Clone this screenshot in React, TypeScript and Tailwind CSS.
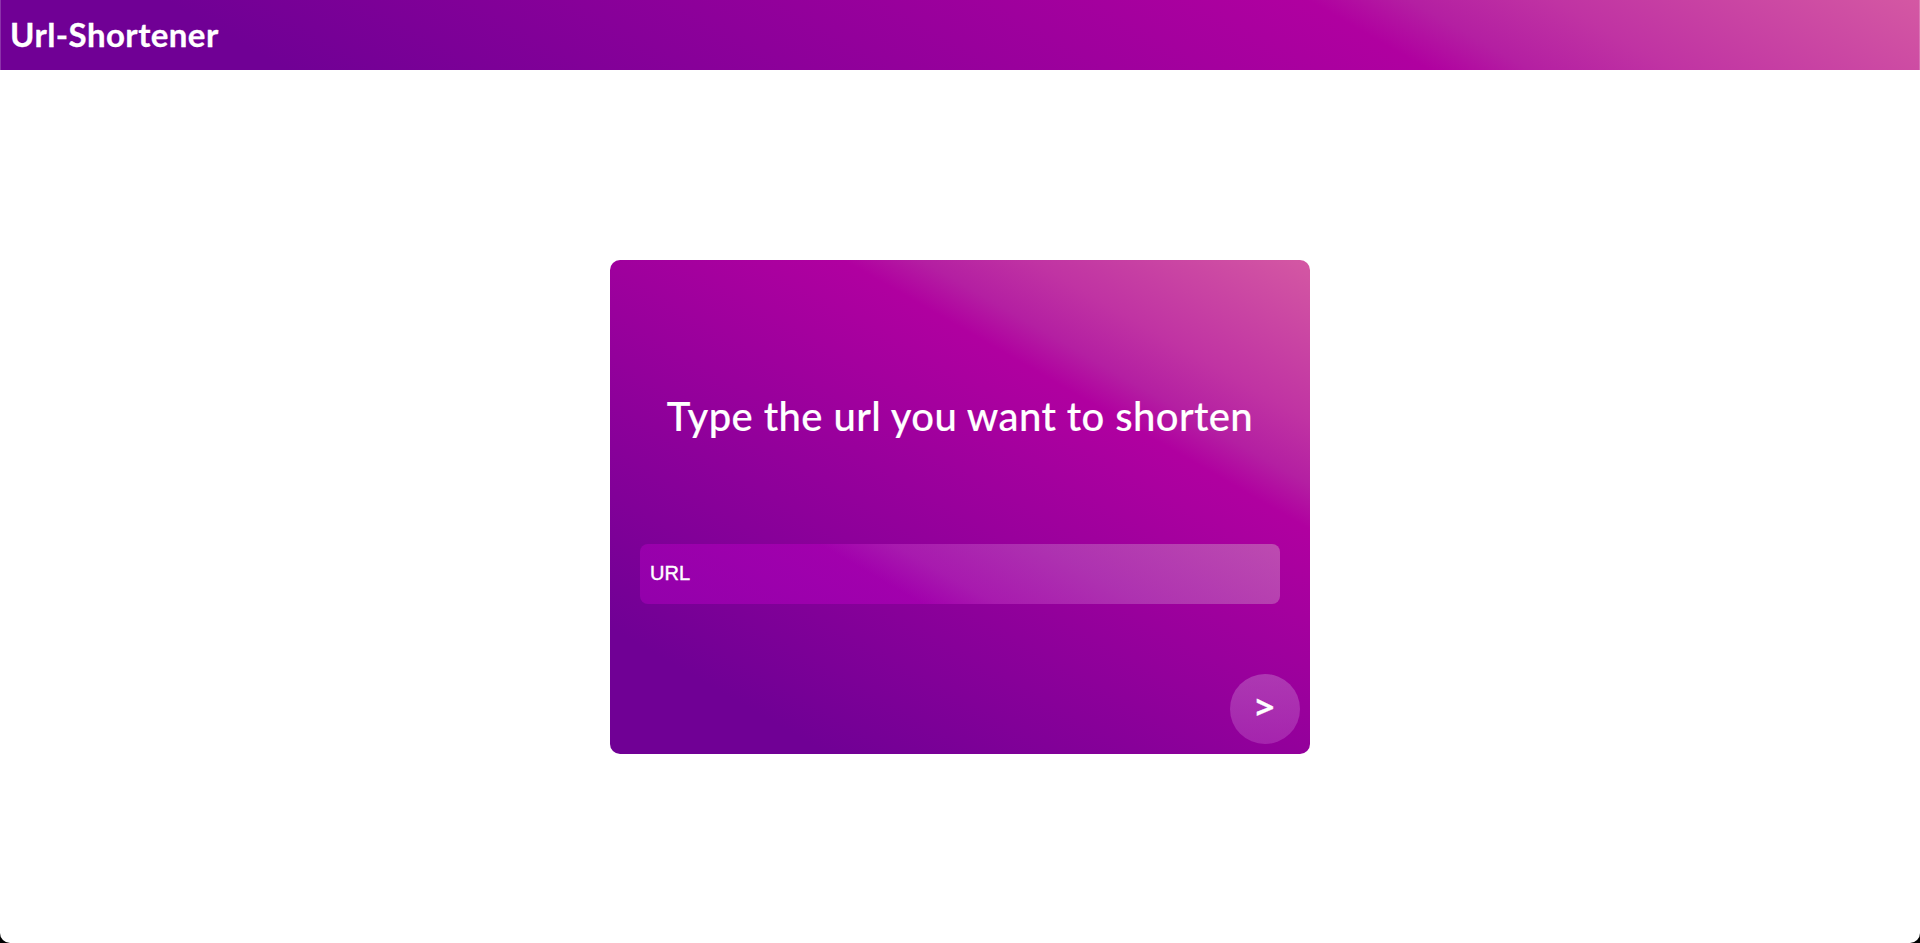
export default function App() {
  return (
    <div className="h-[943px] bg-black">
      <div className="flex h-full flex-col overflow-hidden rounded-b-[10px] bg-white font-[Lato,sans-serif] text-white">
        <header className="flex h-[70px] shrink-0 items-center border-x border-white/20 bg-[linear-gradient(30deg,#700095_14%,#b000a0_70%,#b41fa2_75%,#c033a3_82%,#d458a3_100%)] bg-origin-border px-[9px] pb-[2px]">
          <h1 className="text-[33px] leading-[44px] font-bold tracking-[0.45px] whitespace-nowrap [-webkit-text-stroke:0.3px_white] [stroke-linejoin:round]">
            Url-Shortener
          </h1>
        </header>
        <main className="flex flex-1 items-center justify-center">
          <form
            onSubmit={(e) => e.preventDefault()}
            className="flex h-[494px] w-[700px] flex-col rounded-[10px] bg-[linear-gradient(30deg,#700095_14%,#b000a0_70%,#b41fa2_75%,#c033a3_82%,#d458a3_100%)]"
          >
            <h2 className="mt-[129px] text-center text-[40px] leading-[55px] font-medium tracking-[0.4px] whitespace-nowrap [-webkit-text-stroke:0.15px_white] [stroke-linejoin:round]">
              Type the url you want to shorten
            </h2>
            <input
              type="text"
              placeholder="URL"
              className="mx-[30px] mt-[100px] h-[60px] rounded-[8px] bg-[linear-gradient(30deg,#b000c080_0%,#b900c080_38%,#c034c280_48%,#c164c480_68%,#cd96c180_100%)] px-[10px] font-['Liberation_Sans',Arial,sans-serif] text-[20px] outline-none [-webkit-text-stroke:0.4px_white] placeholder:text-white placeholder:opacity-100"
            />
            <button
              type="submit"
              className="mt-[70px] mr-[10px] flex size-[70px] items-center justify-center self-end rounded-full bg-[linear-gradient(0deg,#b848c080,#c070c880)] pb-[3px] font-['Noto_Sans',sans-serif] text-[33px] leading-[44px] font-bold [-webkit-text-stroke:0.3px_white]"
            >
              &gt;
            </button>
          </form>
        </main>
      </div>
    </div>
  );
}
